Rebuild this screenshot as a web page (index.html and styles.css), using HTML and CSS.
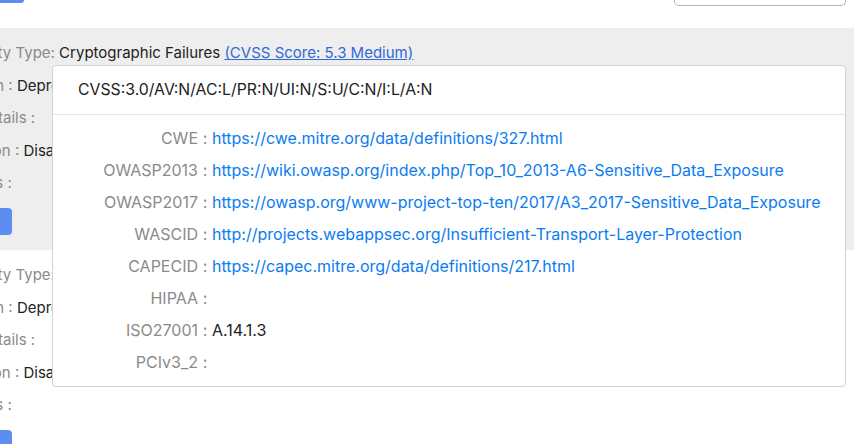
FILE: index.html
```html
<!DOCTYPE html>
<html lang="en">
<head>
<meta charset="utf-8">
<title>Vulnerability details</title>
<link rel="stylesheet" href="styles.css">
</head>
<body>
<div class="page">
  <div class="topbar">
    <div class="btn-stub"></div>
    <div class="search-stub"></div>
  </div>

  <div class="item item-gray">
    <div class="row"><span class="lbl">Vulnerability Type:</span> <span class="val">Cryptographic Failures</span> <a class="score" href="#">(CVSS Score: 5.3 Medium)</a></div>
    <div class="row"><span class="lbl">Description :</span> <span class="val">Deprecated TLS protocol versions are supported by the server</span></div>
    <div class="row"><span class="lbl">Further Details :</span></div>
    <div class="row"><span class="lbl">Remediation :</span> <span class="val">Disable TLS 1.0 and TLS 1.1 on the server</span></div>
    <div class="row"><span class="lbl">References :</span></div>
    <div class="btn"></div>
  </div>

  <div class="item">
    <div class="row"><span class="lbl">Vulnerability Type:</span> <span class="val">Cryptographic Failures</span></div>
    <div class="row"><span class="lbl">Description :</span> <span class="val">Deprecated TLS protocol versions are supported by the server</span></div>
    <div class="row"><span class="lbl">Further Details :</span></div>
    <div class="row"><span class="lbl">Remediation :</span> <span class="val">Disable TLS 1.0 and TLS 1.1 on the server</span></div>
    <div class="row"><span class="lbl">References :</span></div>
    <div class="btn"></div>
  </div>
</div>

<div class="popover">
  <div class="pop-head">CVSS:3.0/AV:N/AC:L/PR:N/UI:N/S:U/C:N/I:L/A:N</div>
  <div class="pop-body">
    <span class="k">CWE</span><span class="c">:</span><a class="v" href="#">https://cwe.mitre.org/data/definitions/327.html</a>
    <span class="k">OWASP2013</span><span class="c">:</span><a class="v" href="#">https://wiki.owasp.org/index.php/Top_10_2013-A6-Sensitive_Data_Exposure</a>
    <span class="k">OWASP2017</span><span class="c">:</span><a class="v" href="#">https://owasp.org/www-project-top-ten/2017/A3_2017-Sensitive_Data_Exposure</a>
    <span class="k">WASCID</span><span class="c">:</span><a class="v" href="#">http://projects.webappsec.org/Insufficient-Transport-Layer-Protection</a>
    <span class="k">CAPECID</span><span class="c">:</span><a class="v" href="#">https://capec.mitre.org/data/definitions/217.html</a>
    <span class="k">HIPAA</span><span class="c">:</span><span class="t"></span>
    <span class="k">ISO27001</span><span class="c">:</span><span class="t">A.14.1.3</span>
    <span class="k">PCIv3_2</span><span class="c">:</span><span class="t"></span>
  </div>
</div>
</body>
</html>
```
FILE: styles.css
```css
html, body {
  margin: 0;
  padding: 0;
}
body {
  width: 854px;
  height: 444px;
  overflow: hidden;
  position: relative;
  background: #fff;
  font-family: Inter, "Noto Sans", sans-serif;
  font-size: 15px;
  color: #222;
}
.page {
  margin-left: -77px;
  white-space: nowrap;
}
.topbar {
  height: 28px;
  display: flex;
  justify-content: space-between;
  align-items: flex-start;
}
.btn-stub {
  width: 101px;
  height: 3px;
  background: #5b8ef0;
  border-radius: 0 0 4px 4px;
}
.search-stub {
  width: 170px;
  height: 5px;
  border: 1px solid #b5b5b5;
  border-top: none;
  border-radius: 0 0 5px 5px;
  margin-right: 8px;
}
.item {
  padding: 9px 0 16px;
}
.item-gray {
  background: #eeeeee;
  height: 197px;
}
.row {
  line-height: 32.5px;
  height: 32.5px;
}
.lbl {
  color: #8a8a8a;
}
.val {
  color: #222;
}
.score {
  color: #2f6bd6;
  text-decoration: underline;
}
.btn {
  margin-top: 8px;
  width: 89px;
  height: 27px;
  background: #5b8ef0;
  border-radius: 4px;
}
.popover {
  position: absolute;
  left: 52px;
  top: 65px;
  width: 794px;
  height: 322px;
  box-sizing: border-box;
  background: #fff;
  border: 1px solid #d2d2d2;
  border-radius: 4px;
  font-size: 16px;
}
.pop-head {
  height: 48px;
  line-height: 48px;
  padding: 0 25px;
  border-bottom: 1px solid #e6e6e6;
  color: #222;
  font-size: 15.8px;
}
.pop-body {
  display: grid;
  grid-template-columns: 145px 14px 1fr;
  grid-auto-rows: 32px;
  align-items: center;
  padding-top: 7px;
  white-space: nowrap;
}
.k {
  text-align: right;
  color: #8a8a8a;
}
.c {
  text-align: center;
  color: #8a8a8a;
}
.v {
  color: #0b7cf0;
  text-decoration: none;
}
.t {
  color: #222;
}
```
